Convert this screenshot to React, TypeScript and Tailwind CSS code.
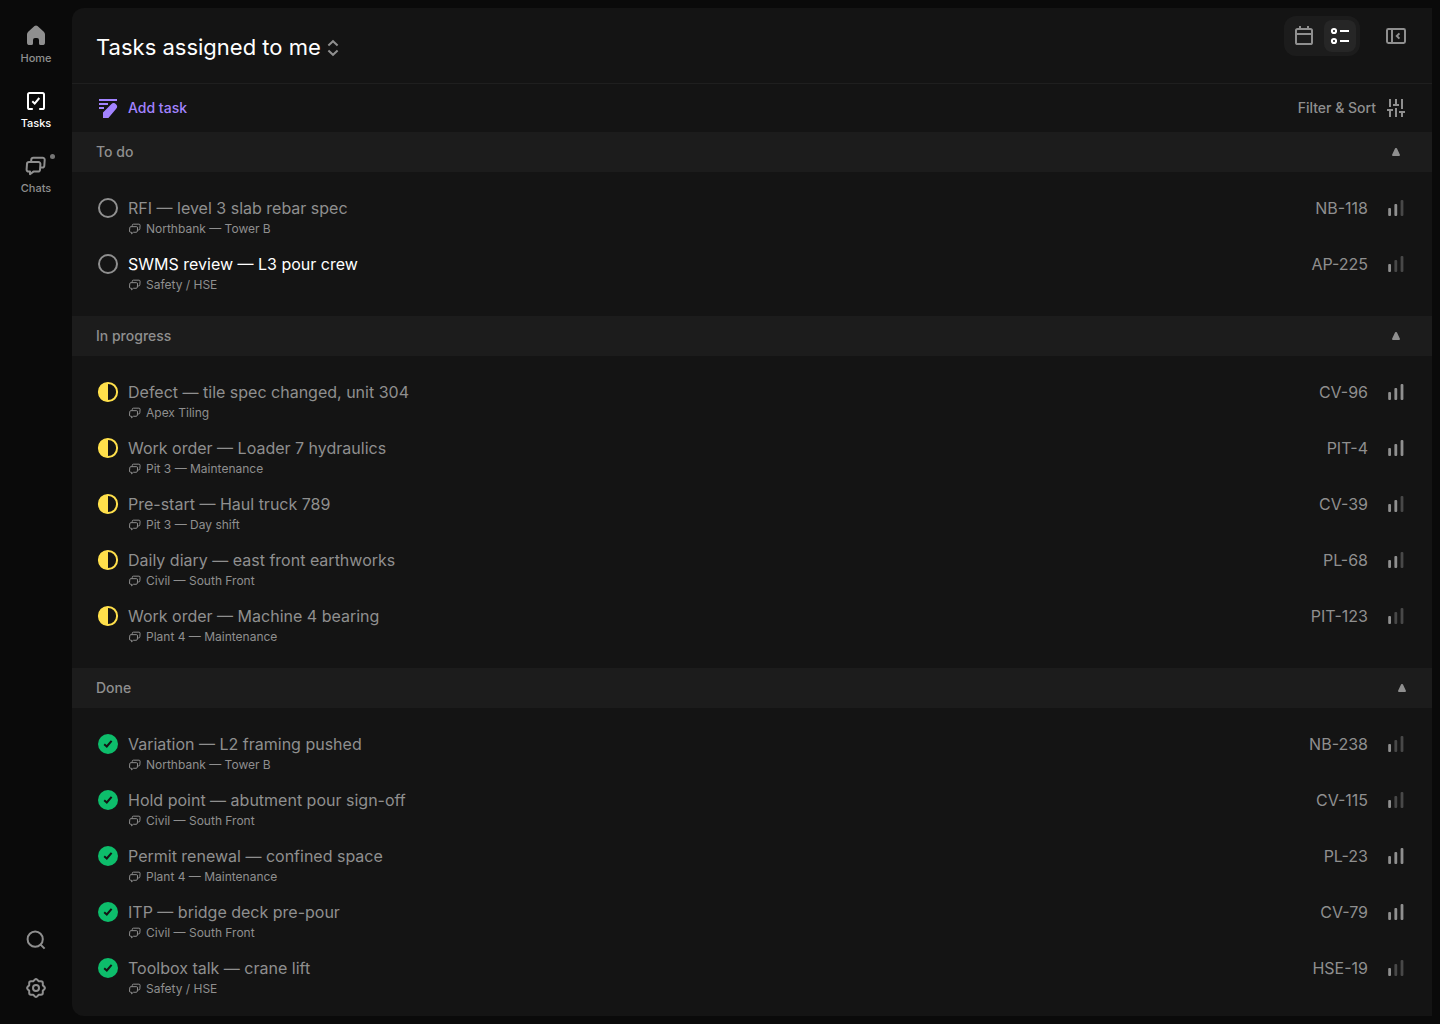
import React, { useState } from 'react';

type Status = 'todo' | 'progress' | 'done';

interface Task {
    id: string;
    title: string;
    chat: string;
    priority: number;
    unread?: boolean;
}

interface TaskGroup {
    status: Status;
    label: string;
    tasks: Task[];
}

const groups: TaskGroup[] = [
    {
        status: 'todo',
        label: 'To do',
        tasks: [
            { id: 'NB-118', title: 'RFI — level 3 slab rebar spec', chat: 'Northbank — Tower B', priority: 2 },
            { id: 'AP-225', title: 'SWMS review — L3 pour crew', chat: 'Safety / HSE', priority: 1, unread: true },
        ],
    },
    {
        status: 'progress',
        label: 'In progress',
        tasks: [
            { id: 'CV-96', title: 'Defect — tile spec changed, unit 304', chat: 'Apex Tiling', priority: 3 },
            { id: 'PIT-4', title: 'Work order — Loader 7 hydraulics', chat: 'Pit 3 — Maintenance', priority: 3 },
            { id: 'CV-39', title: 'Pre-start — Haul truck 789', chat: 'Pit 3 — Day shift', priority: 2 },
            { id: 'PL-68', title: 'Daily diary — east front earthworks', chat: 'Civil — South Front', priority: 2 },
            { id: 'PIT-123', title: 'Work order — Machine 4 bearing', chat: 'Plant 4 — Maintenance', priority: 1 },
        ],
    },
    {
        status: 'done',
        label: 'Done',
        tasks: [
            { id: 'NB-238', title: 'Variation — L2 framing pushed', chat: 'Northbank — Tower B', priority: 1 },
            { id: 'CV-115', title: 'Hold point — abutment pour sign-off', chat: 'Civil — South Front', priority: 1 },
            { id: 'PL-23', title: 'Permit renewal — confined space', chat: 'Plant 4 — Maintenance', priority: 3 },
            { id: 'CV-79', title: 'ITP — bridge deck pre-pour', chat: 'Civil — South Front', priority: 3 },
            { id: 'HSE-19', title: 'Toolbox talk — crane lift', chat: 'Safety / HSE', priority: 1 },
        ],
    },
];

interface IconProps {
    className?: string;
    children: React.ReactNode;
}

const Icon: React.FC<IconProps> = ({ className = 'size-6', children }) => (
    <svg viewBox="0 0 24 24" className={className} fill="none" stroke="currentColor" strokeWidth="2" aria-hidden="true">
        {children}
    </svg>
);

const ChatsIcon: React.FC<{ className?: string }> = ({ className }) => (
    <Icon className={className}>
        <path d="M5 8h9.4a2 2 0 0 1 2 2.1l-.4 5.6a2 2 0 0 1-2 1.9H9.4L6 20.2v-2.6H4.6a2 2 0 0 1-2-2.1L3 9.9A2 2 0 0 1 5 8Z" strokeLinejoin="round" />
        <path d="M7.1 7.6 7.3 5.6a2 2 0 0 1 2-1.9h9.4a2 2 0 0 1 2 2.1l-.4 5.9a2 2 0 0 1-2 1.9h-2" strokeLinejoin="round" />
    </Icon>
);

const StatusIcon: React.FC<{ status: Status }> = ({ status }) => {
    if (status === 'todo') {
        return (
            <Icon className="size-6 text-[#8f8f8f]">
                <circle cx="12" cy="12" r="9" />
            </Icon>
        );
    }
    if (status === 'progress') {
        return (
            <Icon className="size-6 text-[#ffe04b]">
                <circle cx="12" cy="12" r="9.1" />
                <path d="M12 2.5a9.5 9.5 0 0 0 0 19Z" fill="currentColor" stroke="none" />
            </Icon>
        );
    }
    return (
        <Icon className="size-6 text-[#0dbd6b]">
            <circle cx="12" cy="12" r="10" fill="currentColor" stroke="none" />
            <path d="m8.2 12.2 2.6 2.3 4.8-5.7" stroke="#141414" />
        </Icon>
    );
};

const PriorityIcon: React.FC<{ level: number }> = ({ level }) => (
    <svg viewBox="0 0 24 24" className="size-6" role="img" aria-label={`Priority ${level} of 3`}>
        <rect x="4.2" y="12" width="2.8" height="8" rx="1" fill="#8f8f8f" />
        <rect x="10.4" y="8" width="2.8" height="12" rx="1" fill={level > 1 ? '#8f8f8f' : '#484848'} />
        <rect x="16.6" y="4" width="2.8" height="16" rx="1" fill={level > 2 ? '#8f8f8f' : '#484848'} />
    </svg>
);

const Sidebar: React.FC = () => (
    <nav className="w-18 shrink-0 flex flex-col justify-between items-center py-6 text-[#8f8f8f]">
        <div className="flex flex-col items-center gap-[21px] text-[11px] leading-5 font-medium">
            <a href="#home" className="flex flex-col items-center">
                <Icon>
                    <path d="M10.5 2.1a2.3 2.3 0 0 1 3 0l6.3 5.6A3.6 3.6 0 0 1 21 10.4v8A2.6 2.6 0 0 1 18.4 21h-1.8a1.6 1.6 0 0 1-1.6-1.6V16a2 2 0 0 0-2-2h-2a2 2 0 0 0-2 2v3.4A1.6 1.6 0 0 1 7.4 21H5.6A2.6 2.6 0 0 1 3 18.4v-8a3.6 3.6 0 0 1 1.2-2.7Z" fill="currentColor" stroke="none" />
                </Icon>
                Home
            </a>
            <a href="#tasks" className="flex flex-col items-center text-white" aria-current="page">
                <Icon>
                    <path d="M8.8 20H5.6A1.6 1.6 0 0 1 4 18.4V5.6A1.6 1.6 0 0 1 5.6 4h12.8A1.6 1.6 0 0 1 20 5.6v12.8a1.6 1.6 0 0 1-1.6 1.6h-3.2" />
                    <path d="m8.3 12.3 2.4 2.3 4.6-5.6" />
                </Icon>
                Tasks
            </a>
            <a href="#chats" className="relative flex flex-col items-center">
                <ChatsIcon className="size-6" />
                Chats
                <span className="absolute top-0 -right-1 size-[5px] rounded-full bg-[#757575]"></span>
            </a>
        </div>
        <div className="flex flex-col gap-6">
            <button aria-label="Search">
                <Icon>
                    <circle cx="11.2" cy="11.2" r="7.6" />
                    <path d="m16.6 16.6 4 4" />
                </Icon>
            </button>
            <button aria-label="Settings">
                <Icon>
                    <path d="M9.2 5.2 11 3.5Q12 2.6 13 3.5L14.8 5.2H17Q18.8 5.2 18.8 7V9.2L20.5 11Q21.4 12 20.5 13L18.8 14.8V17Q18.8 18.8 17 18.8H14.8L13 20.5Q12 21.4 11 20.5L9.2 18.8H7Q5.2 18.8 5.2 17V14.8L3.5 13Q2.6 12 3.5 11L5.2 9.2V7Q5.2 5.2 7 5.2Z" strokeLinejoin="round" />
                    <circle cx="12" cy="12" r="3" />
                </Icon>
            </button>
        </div>
    </nav>
);

const Header: React.FC = () => (
    <header className="h-19 px-6 flex justify-between border-b border-[#1f1f1f]">
        <button className="flex items-center pt-0.5 text-white">
            <h1 className="text-[22px] leading-8">Tasks assigned to me</h1>
            <Icon className="size-6 text-[#8f8f8f]">
                <path d="m7.4 10.4 4.6-4.2 4.6 4.2M7.4 15.6l4.6 4.2 4.6-4.2" />
            </Icon>
        </button>
        <div className="flex items-center gap-6 h-10 mt-2 text-[#8f8f8f]">
            <div className="flex gap-1 p-1 rounded-xl bg-[#1c1c1c]">
                <button className="size-8 flex items-center justify-center rounded-lg" aria-label="Calendar view">
                    <Icon>
                        <rect x="4" y="5" width="16" height="15" rx="1.6" />
                        <path d="M4 9.9h16M8 2v3M16 2v3" />
                    </Icon>
                </button>
                <button className="size-8 flex items-center justify-center rounded-lg bg-[#262626] text-white" aria-label="List view">
                    <Icon>
                        <circle cx="6" cy="7" r="2.1" />
                        <circle cx="6" cy="17" r="2.1" />
                        <path d="M12 7h9M12 17h9" />
                    </Icon>
                </button>
            </div>
            <button aria-label="Toggle side panel">
                <Icon>
                    <rect x="3" y="5" width="18" height="14" rx="1.4" />
                    <path d="M8 5v14M15.4 9.4l-2.6 2.6 2.6 2.6" />
                </Icon>
            </button>
        </div>
    </header>
);

const TaskRow: React.FC<{ task: Task; status: Status }> = ({ task, status }) => (
    <li className="h-14 px-6 py-2 flex items-start gap-2">
        <button aria-label={`Change status of ${task.title}`}>
            <StatusIcon status={status} />
        </button>
        <div className="flex-1 min-w-0">
            <div className={`text-base ${task.unread ? 'text-white' : 'text-[#8f8f8f]'}`}>{task.title}</div>
            <div className="flex items-center gap-1 text-xs leading-[18px]">
                <ChatsIcon className="size-3.5 stroke-[1.7]" />
                {task.chat}
            </div>
        </div>
        <div className="flex items-center gap-4">
            <span>{task.id}</span>
            <PriorityIcon level={task.priority} />
        </div>
    </li>
);

const GroupSection: React.FC<{ group: TaskGroup }> = ({ group }) => {
    const [open, setOpen] = useState(true);
    const isDone = group.status === 'done';

    return (
        <section>
            <button
                onClick={() => setOpen(!open)}
                aria-expanded={open}
                className={`w-full h-10 pl-6 flex items-center justify-between bg-[#1c1c1c] text-sm font-medium ${isDone ? 'pr-[26px]' : 'pr-8'}`}
            >
                {group.label}
                <svg viewBox="0 0 8 8" className={`size-2 ${open ? '' : 'rotate-180'}`} fill="currentColor" aria-hidden="true">
                    <path d="M3 .6a1.1 1.1 0 0 1 2 0l2.8 6A1 1 0 0 1 6.9 8H1.1a1 1 0 0 1-.9-1.4Z" />
                </svg>
            </button>
            {open && (
                <ul className={isDone ? 'pt-4 pb-3' : 'py-4'}>
                    {group.tasks.map((task) => (
                        <TaskRow key={task.id} task={task} status={group.status} />
                    ))}
                </ul>
            )}
        </section>
    );
};

export default function App() {
    return (
        <div className="min-h-screen flex bg-[#0a0a0a] font-['Inter',sans-serif] text-[#8f8f8f]">
            <Sidebar />
            <main className="flex-1 min-w-0 my-2 mr-2 rounded-l-xl bg-[#141414] overflow-hidden">
                <Header />
                <div className="h-12 px-6 flex items-center justify-between text-sm font-medium">
                    <button className="flex items-center gap-2 text-[#a283ff]">
                        <Icon>
                            <path d="M3 4h18M3 8h9M3 12h5" />
                            <path d="M7 22v-5.6l8.2-8.1a3.4 3.4 0 0 1 4.8 0 3.4 3.4 0 0 1 0 4.8L12.4 22Z" fill="currentColor" stroke="none" />
                        </Icon>
                        Add task
                    </button>
                    <button className="flex items-center gap-2">
                        Filter &amp; Sort
                        <Icon>
                            <path d="M6 3v8M3 14h6M6 14v7M12 3v6M9 9h6M12 12v9M18 3v10M15 16h6M18 16v5" />
                        </Icon>
                    </button>
                </div>
                {groups.map((group) => (
                    <GroupSection key={group.status} group={group} />
                ))}
            </main>
        </div>
    );
}
